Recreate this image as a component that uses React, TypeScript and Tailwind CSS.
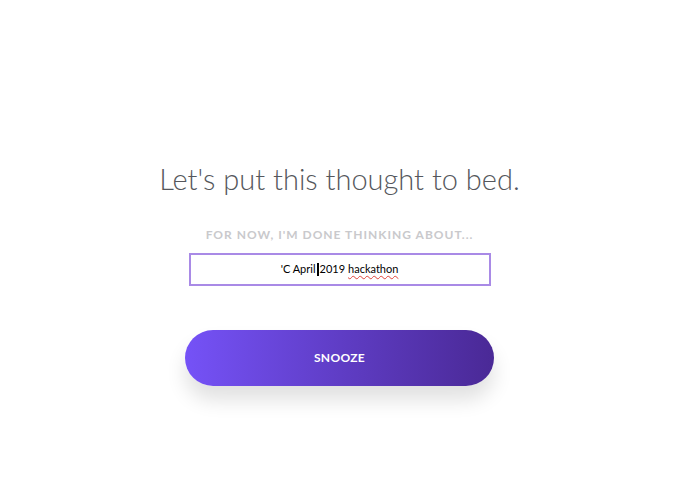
export default function App() {
  return (
    <div className="w-[695px] h-[494px] bg-white" style={{ fontFamily: 'Lato, "Noto Sans", sans-serif' }}>
      <div className="w-[679px] flex flex-col items-center pt-[159px]">
        <h1 className="text-[29px] font-light text-[#55575c] leading-[40px]">
          Let's put this thought to bed.
        </h1>
        <p className="mt-[28px] text-[12px] font-bold tracking-[1px] text-[#c9c9cc] leading-[16px]">
          FOR NOW, I'M DONE THINKING ABOUT...
        </p>
        <div className="mt-[10px] w-[302px] h-[33px] border-[2px] border-[#a98ae6] flex items-center justify-center text-[11px] text-black">
          <span>'C April</span>
          <span className="inline-block w-[2px] h-[13px] bg-black mx-[1px]" />
          <span>2019 </span>
          <span className="ml-[3px] underline decoration-wavy decoration-[#e0443a] decoration-1 underline-offset-2">hackathon</span>
        </div>
        <button className="mt-[44px] w-[309px] h-[56px] rounded-full bg-gradient-to-r from-[#7552f7] to-[#4a2996] text-white text-[12px] font-bold tracking-[0.3px] shadow-[0_14px_20px_rgba(0,0,0,0.12)]">
          SNOOZE
        </button>
      </div>
    </div>
  );
}
